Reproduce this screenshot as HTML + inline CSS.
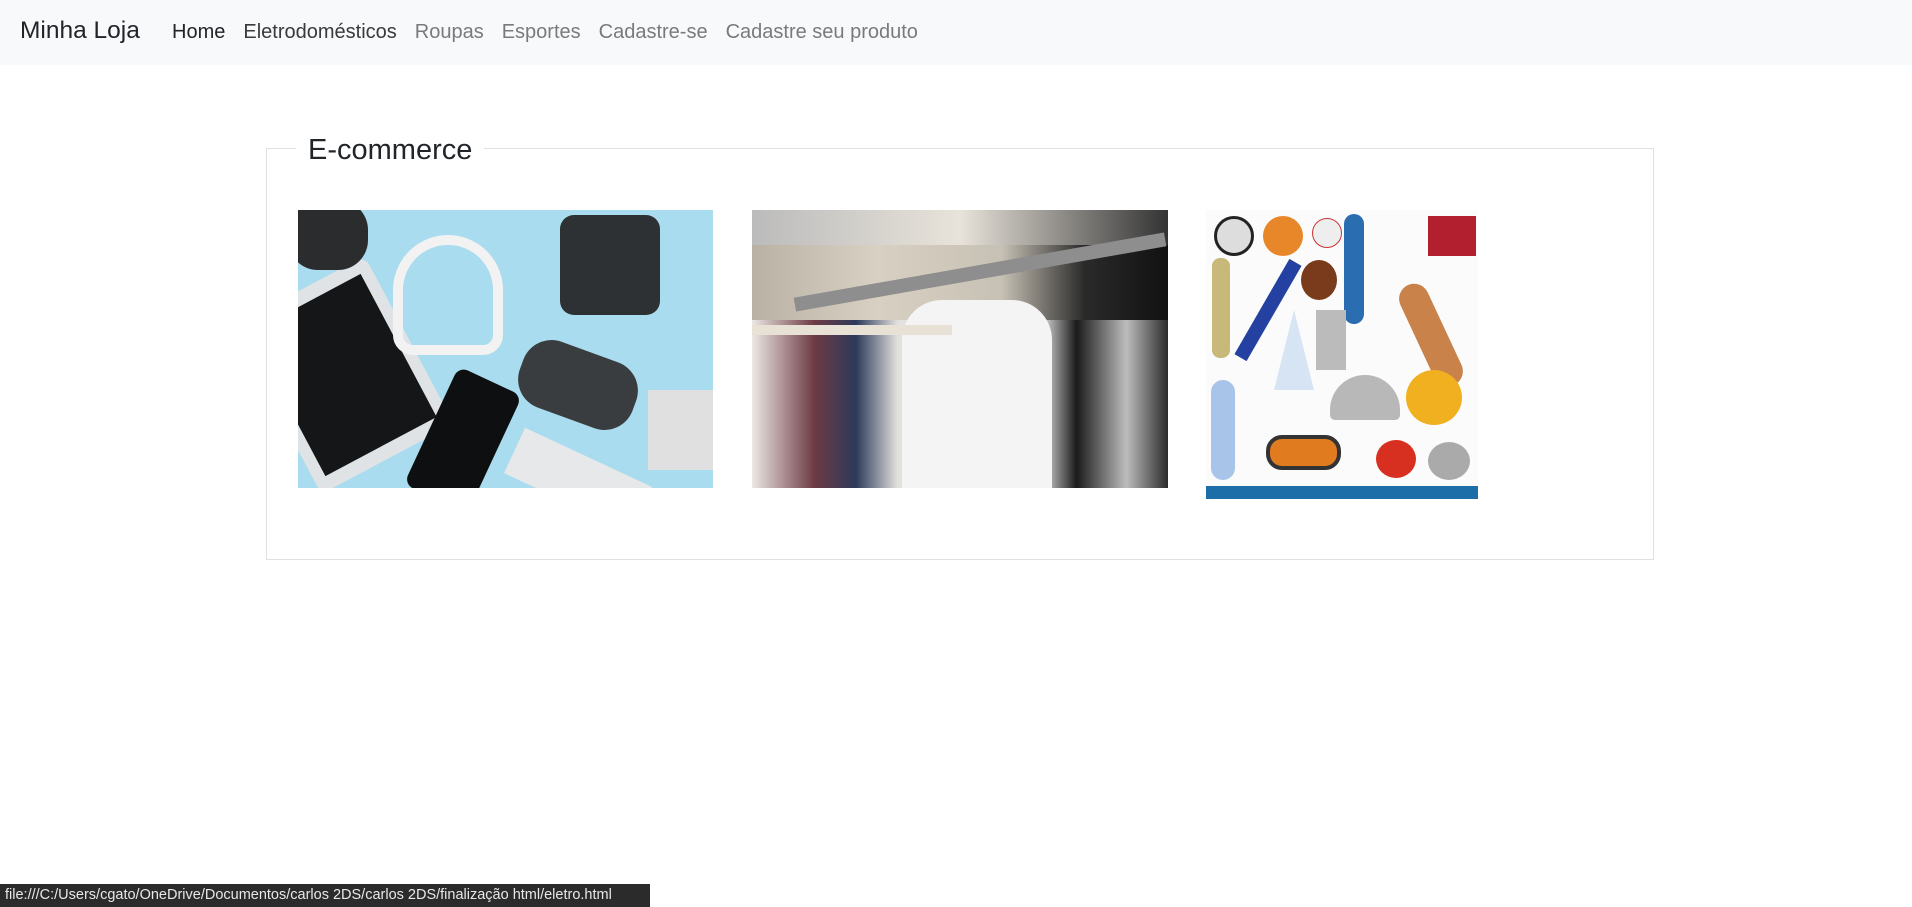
<!DOCTYPE html>
<html><head><meta charset="utf-8">
<style>
*{box-sizing:border-box;margin:0;padding:0}
body{width:1912px;height:907px;background:#fff;font-family:"Liberation Sans",sans-serif;position:relative;overflow:hidden}
.nav{position:absolute;left:0;top:0;width:1912px;height:65px;background:#f8f9fa}
.brand{position:absolute;left:20px;top:17px;font-size:24.5px;color:#212529}
.links{position:absolute;left:172px;top:21px;font-size:20px;color:#7a7a7a;white-space:nowrap}
.links span{margin-right:18px}
.fs{position:absolute;left:266px;top:148px;width:1388px;height:412px;border:1px solid #dee2e6}
.leg{position:absolute;left:296px;top:134px;background:#fff;padding:0 12px;font-size:29px;color:#212529}
.img{position:absolute;overflow:hidden}
.status{position:absolute;left:0;top:884px;width:650px;height:23px;background:#2b2b2b;color:#e8e8e8;font-size:14.5px;padding:3px 5px;white-space:nowrap}
</style></head><body>
<div class="nav">
<div class="brand">Minha Loja</div>
<div class="links"><span style="color:#212529">Home</span><span style="color:#3a3a3a">Eletrodomésticos</span><span>Roupas</span><span>Esportes</span><span>Cadastre-se</span><span>Cadastre seu produto</span></div>
</div>
<div class="fs"></div>
<div class="leg">E-commerce</div>

<div class="img" style="left:298px;top:210px;width:415px;height:278px;background:#a9dcee">
<div style="position:absolute;left:-30px;top:70px;width:150px;height:190px;background:#dfe3e6;border-radius:10px;transform:rotate(-28deg)"><div style="position:absolute;left:12px;top:14px;right:12px;bottom:14px;background:#141618"></div></div>
<div style="position:absolute;left:130px;top:165px;width:70px;height:130px;background:#0d0f11;border-radius:10px;transform:rotate(25deg)"></div>
<div style="position:absolute;left:262px;top:5px;width:100px;height:100px;background:#2e3133;border-radius:14px"></div>
<div style="position:absolute;left:220px;top:140px;width:120px;height:70px;background:#3a3d40;border-radius:30px;transform:rotate(20deg)"></div>
<div style="position:absolute;left:95px;top:25px;width:110px;height:120px;border:10px solid #f2f2f2;border-radius:55px 55px 20px 20px"></div>
<div style="position:absolute;left:210px;top:245px;width:140px;height:50px;background:#e6e8ea;transform:rotate(25deg)"></div>
<div style="position:absolute;left:350px;top:180px;width:70px;height:80px;background:#e0e0e0"></div>
<div style="position:absolute;left:-10px;top:-10px;width:80px;height:70px;background:#2a2c2e;border-radius:30px"></div>
</div>

<div class="img" style="left:752px;top:210px;width:416px;height:278px;background:linear-gradient(90deg,#b9b2a4 0,#d8d0c2 30%,#c7c1b5 60%,#2a2a2a 80%,#111 100%)">
<div style="position:absolute;left:0;top:0;width:416px;height:35px;background:linear-gradient(90deg,#bbb 0,#e8e3da 50%,#333 100%)"></div>
<div style="position:absolute;left:0;top:110px;width:416px;height:168px;background:linear-gradient(90deg,#ece8e4,#6d3a44 15%,#2c3a5a 25%,#e2e0dd 35%,#fafafa 55%,#d6d6d6 70%,#1a1a1a 78%,#bdbdbd 90%,#2b2b2b)"></div>
<div style="position:absolute;left:150px;top:90px;width:150px;height:200px;background:#f4f4f4;border-radius:40px 40px 0 0"></div>
<div style="position:absolute;left:40px;top:55px;width:376px;height:14px;background:#8e8e8e;transform:rotate(-10deg)"></div>
<div style="position:absolute;left:0;top:115px;width:200px;height:10px;background:#e8e2d6"></div>
</div>

<div class="img" style="left:1206px;top:210px;width:272px;height:289px;background:#fbfbfb">
<div style="position:absolute;left:8px;top:6px;width:40px;height:40px;border-radius:50%;background:#ddd;border:3px solid #222"></div>
<div style="position:absolute;left:57px;top:6px;width:40px;height:40px;border-radius:50%;background:#e8862a"></div>
<div style="position:absolute;left:106px;top:8px;width:30px;height:30px;border-radius:50%;background:#eee;border:1px solid #c33"></div>
<div style="position:absolute;left:138px;top:4px;width:20px;height:110px;border-radius:10px;background:#2a6db0"></div>
<div style="position:absolute;left:222px;top:6px;width:48px;height:40px;background:#b22030"></div>
<div style="position:absolute;left:6px;top:48px;width:18px;height:100px;background:#c8b87a;border-radius:8px"></div>
<div style="position:absolute;left:55px;top:45px;width:14px;height:110px;background:#2440a0;transform:rotate(30deg)"></div>
<div style="position:absolute;left:95px;top:50px;width:36px;height:40px;border-radius:50%;background:#7a3a1c"></div>
<div style="position:absolute;left:210px;top:70px;width:30px;height:110px;background:#c8824a;border-radius:15px;transform:rotate(-25deg)"></div>
<div style="position:absolute;left:68px;top:100px;width:40px;height:80px;background:#d6e4f4;clip-path:polygon(50% 0,100% 100%,0 100%)"></div>
<div style="position:absolute;left:110px;top:100px;width:30px;height:60px;background:#bbb"></div>
<div style="position:absolute;left:124px;top:165px;width:70px;height:45px;background:#b8b8b8;border-radius:35px 35px 5px 5px"></div>
<div style="position:absolute;left:200px;top:160px;width:56px;height:55px;background:#f0b020;border-radius:50%"></div>
<div style="position:absolute;left:5px;top:170px;width:24px;height:100px;background:#a8c4e8;border-radius:12px"></div>
<div style="position:absolute;left:60px;top:225px;width:75px;height:35px;background:#e07b20;border:4px solid #333;border-radius:16px"></div>
<div style="position:absolute;left:170px;top:230px;width:40px;height:38px;background:#d83020;border-radius:50%"></div>
<div style="position:absolute;left:222px;top:232px;width:42px;height:38px;background:#aaa;border-radius:50%"></div>
<div style="position:absolute;left:0;top:276px;width:272px;height:13px;background:#1b6ea8"></div>
</div>

<div class="status">file:///C:/Users/cgato/OneDrive/Documentos/carlos 2DS/carlos 2DS/finalização html/eletro.html</div>
</body></html>
